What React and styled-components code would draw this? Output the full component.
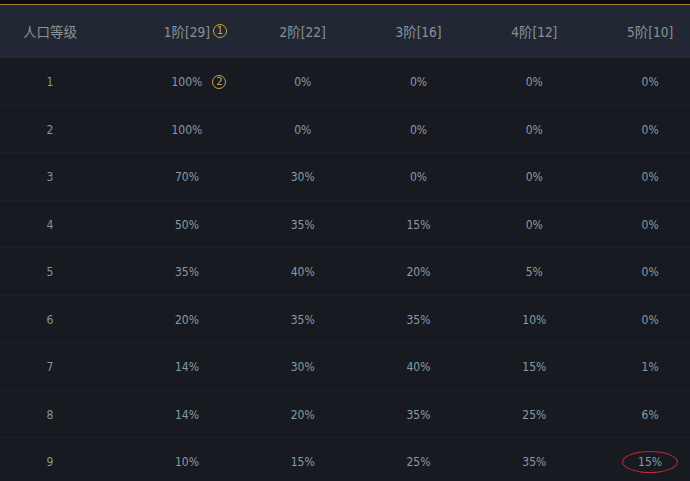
import React from 'react';
import styled, { createGlobalStyle } from 'styled-components';

const GlobalStyle = createGlobalStyle`
  body {
    margin: 0;
    padding: 0;
    background-color: #171a21;
    font-family: 'Liberation Sans Narrow', 'DejaVu Sans Condensed', 'Noto Sans CJK SC', sans-serif;
  }
`;

const Page = styled.div`
  width: 690px;
  height: 481px;
  overflow: hidden;
  background-color: #171a21;
  border-top: 4px solid #0b0c0f;
`;

const Table = styled.div`
  width: 708px;
  display: flex;
  flex-direction: column;
`;

const Row = styled.div`
  display: grid;
  grid-template-columns: 129px repeat(5, 115.8px);
  align-items: center;
  box-sizing: border-box;
  height: ${(p) => (p.$head ? '54px' : '47.5px')};
  background-color: ${(p) => (p.$head ? '#212833' : '#171a21')};
  border-top: 1px solid ${(p) => (p.$head ? '#a27b2c' : 'transparent')};
  border-bottom: 1px solid ${(p) => (p.$head ? '#212833' : '#1c2028')};
`;

const Cell = styled.div`
  position: relative;
  text-align: center;
  padding-right: ${(p) => (p.$first ? '29px' : '0')};
  padding-top: ${(p) => (p.$head ? '0' : '1px')};
  font-size: ${(p) => (p.$head ? '13.5px' : '12px')};
  color: ${(p) => (p.$head ? '#89929a' : p.$first ? '#8a948e' : '#8a9aa4')};
`;

const Text = styled.span`
  position: relative;
  display: inline-block;
`;

const Mark = styled.span`
  position: absolute;
  left: calc(100% + ${(p) => p.$gap}px);
  top: 50%;
  transform: translateY(-50%);
  width: 14px;
  height: 14px;
  box-sizing: border-box;
  border: 1.3px solid #c9a447;
  border-radius: 50%;
  color: #c9a447;
  font-size: 10px;
  line-height: 12px;
  text-align: center;
  font-family: 'DejaVu Sans', sans-serif;
`;

const Ring = styled.span`
  position: absolute;
  left: 50%;
  top: 50%;
  width: 56px;
  height: 22px;
  transform: translate(-50%, -50%);
  border: 1.3px solid #c3262d;
  border-radius: 50%;
  box-sizing: border-box;
`;

const heads = ['人口等级', '1阶[29]', '2阶[22]', '3阶[16]', '4阶[12]', '5阶[10]'];

const data = [
  ['100%', '0%', '0%', '0%', '0%'],
  ['100%', '0%', '0%', '0%', '0%'],
  ['70%', '30%', '0%', '0%', '0%'],
  ['50%', '35%', '15%', '0%', '0%'],
  ['35%', '40%', '20%', '5%', '0%'],
  ['20%', '35%', '35%', '10%', '0%'],
  ['14%', '30%', '40%', '15%', '1%'],
  ['14%', '20%', '35%', '25%', '6%'],
  ['10%', '15%', '25%', '35%', '15%'],
];

function App() {
  return (
    <>
      <GlobalStyle />
      <Page>
        <Table>
          <Row $head>
            {heads.map((h, i) => (
              <Cell key={h} $head $first={i === 0}>
                <Text>
                  {h}
                  {i === 1 && <Mark $gap={3}>1</Mark>}
                </Text>
              </Cell>
            ))}
          </Row>
          {data.map((vals, r) => (
            <Row key={r}>
              <Cell $first>{r + 1}</Cell>
              {vals.map((v, c) => (
                <Cell key={c}>
                  <Text>
                    {v}
                    {r === 0 && c === 0 && <Mark $gap={10}>2</Mark>}
                    {r === 8 && c === 4 && <Ring />}
                  </Text>
                </Cell>
              ))}
            </Row>
          ))}
        </Table>
      </Page>
    </>
  );
}

export default App;
